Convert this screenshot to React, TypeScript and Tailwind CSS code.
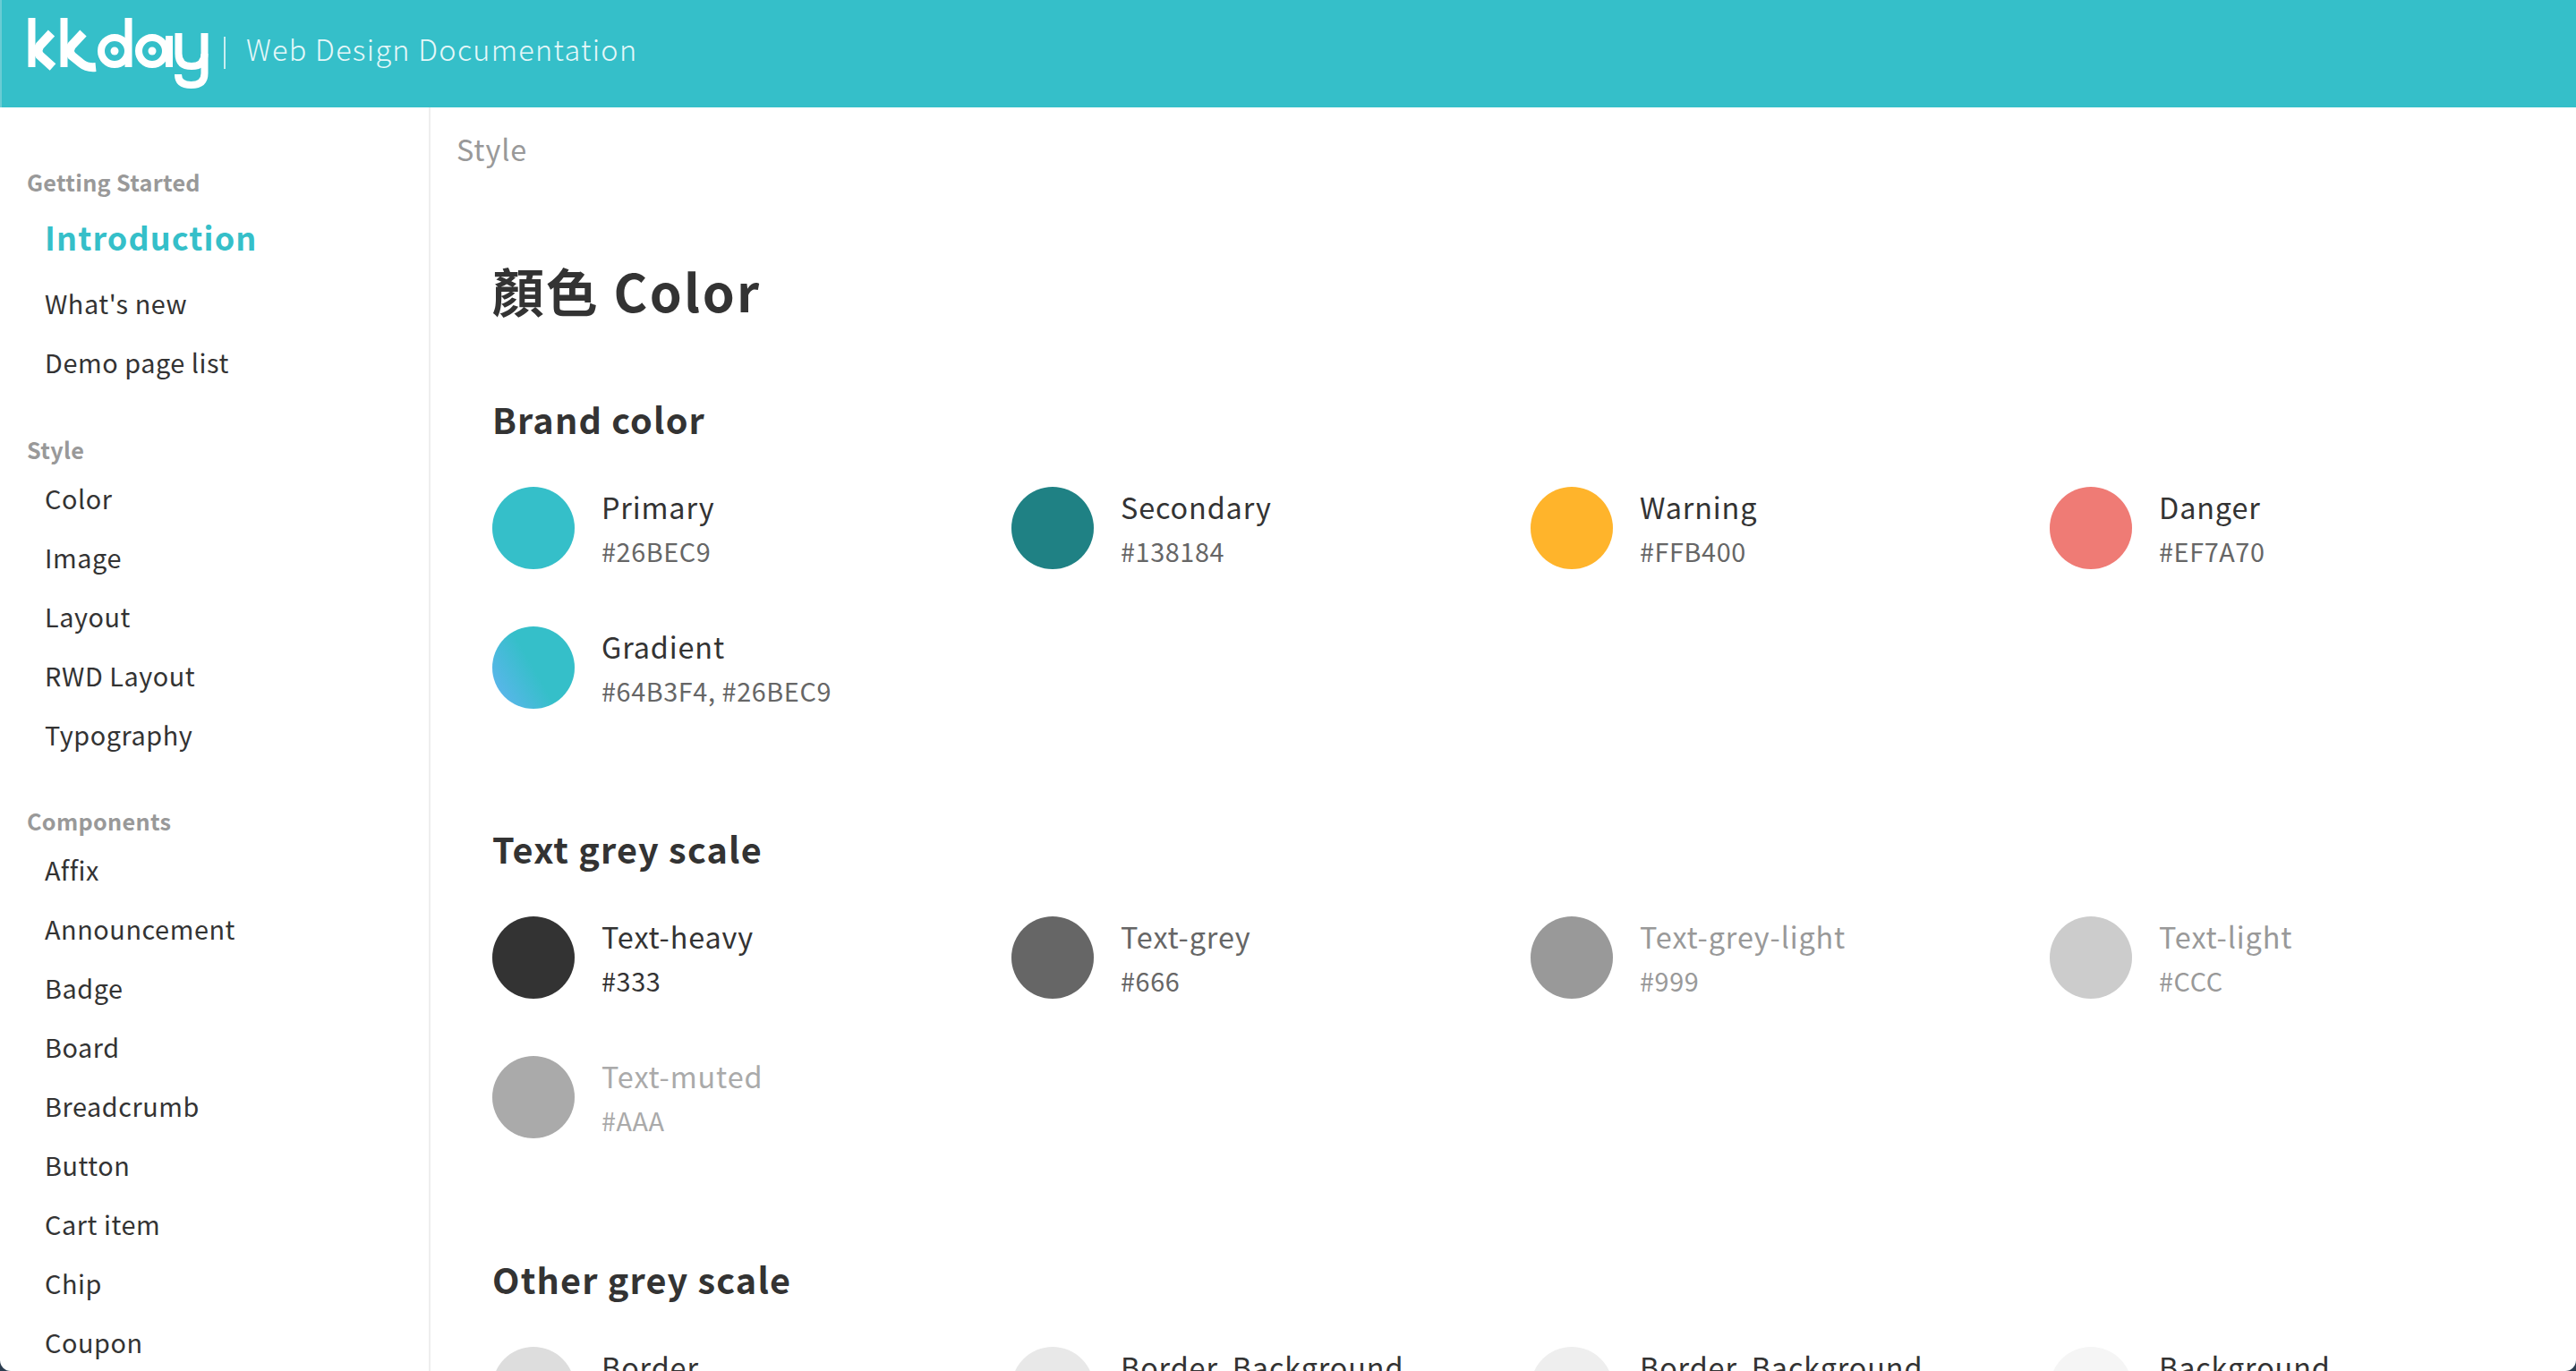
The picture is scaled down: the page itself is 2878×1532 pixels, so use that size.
const sans = "font-['Noto_Sans_CJK_TC','Noto_Sans',sans-serif]";

function Logo() {
  return (
    <svg width="240" height="120" viewBox="0 0 240 120" className="shrink-0" fill="none" stroke="#fff" strokeWidth="8" strokeLinecap="butt">
      <path d="M33.500 20V75" />
      <path d="M55.500 37L42.500 51Q38.500 56.500 42.500 62L57 75" strokeWidth="10" />
      <path d="M69.500 20V75" />
      <path d="M91 37L78 51Q74 56.500 78 62L89 71Q95 76 105 75" strokeWidth="10" />
      <circle cx="126" cy="57" r="15" />
      <circle cx="126" cy="57" r="4.500" fill="#fff" stroke="none" />
      <path d="M141.500 20V75" />
      <circle cx="168" cy="57" r="15" />
      <circle cx="168" cy="57" r="4.500" fill="#fff" stroke="none" />
      <path d="M187 40V75" />
      <path d="M197.500 37V60Q197.500 74 212 74Q226.500 74 226.500 60" />
      <path d="M226.500 37V82Q226.500 95 211.500 95Q197 95 197 83" />
    </svg>
  );
}

const groups: { title: string; items: string[] }[] = [
  { title: "Style", items: ["Color", "Image", "Layout", "RWD Layout", "Typography"] },
  { title: "Components", items: ["Affix", "Announcement", "Badge", "Board", "Breadcrumb", "Button", "Cart item", "Chip", "Coupon"] },
];

function NavItem({ label }: { label: string }) {
  return <div className="pl-[50px] h-[66px] flex items-center text-[28.8px] leading-none tracking-[0.57px] text-[#333]">{label}</div>;
}

function Sidebar() {
  return (
    <aside className="w-[481px] shrink-0 border-r-[2px] border-[#eeeeee] pt-[71px]">
      <div className="pl-[30px] h-[26px] mb-[16px] flex items-center text-[25.2px] font-bold leading-none tracking-[0.3px] text-[#999]">Getting Started</div>
      <div className="pl-[50px] h-[62px] mb-[11px] flex items-center text-[36px] font-bold leading-none tracking-[1.1px] text-[#35bfc9]">Introduction</div>
      <NavItem label="What's new" />
      <NavItem label="Demo page list" />
      <div className="h-[20px]" />
      {groups.map((g) => (
        <div key={g.title} className="mt-[32px]">
          <div className="pl-[30px] h-[26px] mb-[8px] flex items-center text-[25.2px] font-bold leading-none tracking-[0.3px] text-[#999]">{g.title}</div>
          {g.items.map((i) => <NavItem key={i} label={i} />)}
          <div className="h-[19px]" />
        </div>
      ))}
    </aside>
  );
}

type Swatch = { name: string; code: string; bg: string; nameC: string; codeC: string };

function SwatchItem({ s }: { s: Swatch }) {
  return (
    <div className="flex items-center gap-[30px] h-[92px]">
      <div className={`w-[92px] h-[92px] rounded-full shrink-0 ${s.bg}`} />
      <div className="flex flex-col pb-[2px]">
        <div className={`text-[32.4px] leading-[52px] tracking-[0.85px] ${s.nameC}`}>{s.name}</div>
        <div className={`text-[28.8px] leading-[47px] tracking-[0.6px] ${s.codeC}`}>{s.code}</div>
      </div>
    </div>
  );
}

function Section({ title, items, className }: { title: string; items: Swatch[]; className: string }) {
  return (
    <section className={className}>
      <h2 className="text-[39.6px] font-bold leading-[60px] text-[#333] tracking-[1.17px]">{title}</h2>
      <div className="grid grid-cols-[580px_580px_580px_580px] gap-y-[64px] mt-[46px]">
        {items.map((s) => <SwatchItem key={s.name} s={s} />)}
      </div>
    </section>
  );
}

const brand: Swatch[] = [
  { name: "Primary", code: "#26BEC9", bg: "bg-[#35bfc9]", nameC: "text-[#333]", codeC: "text-[#666]" },
  { name: "Secondary", code: "#138184", bg: "bg-[#1f8184]", nameC: "text-[#333]", codeC: "text-[#666]" },
  { name: "Warning", code: "#FFB400", bg: "bg-[#ffb42b]", nameC: "text-[#333]", codeC: "text-[#666]" },
  { name: "Danger", code: "#EF7A70", bg: "bg-[#ef7b75]", nameC: "text-[#333]", codeC: "text-[#666]" },
  { name: "Gradient", code: "#64B3F4, #26BEC9", bg: "bg-[linear-gradient(60deg,#64b3f4_0%,#35bfc9_50%)]", nameC: "text-[#333]", codeC: "text-[#666]" },
];
const textGrey: Swatch[] = [
  { name: "Text-heavy", code: "#333", bg: "bg-[#333]", nameC: "text-[#333]", codeC: "text-[#333]" },
  { name: "Text-grey", code: "#666", bg: "bg-[#666]", nameC: "text-[#666]", codeC: "text-[#666]" },
  { name: "Text-grey-light", code: "#999", bg: "bg-[#999]", nameC: "text-[#999]", codeC: "text-[#999]" },
  { name: "Text-light", code: "#CCC", bg: "bg-[#ccc]", nameC: "text-[#999]", codeC: "text-[#999]" },
  { name: "Text-muted", code: "#AAA", bg: "bg-[#aaa]", nameC: "text-[#aaa]", codeC: "text-[#aaa]" },
];
const otherGrey: Swatch[] = [
  { name: "Border", code: "#DDD", bg: "bg-[#ddd]", nameC: "text-[#333]", codeC: "text-[#666]" },
  { name: "Border, Background", code: "#E8E8E8", bg: "bg-[#e8e8e8]", nameC: "text-[#333]", codeC: "text-[#666]" },
  { name: "Border, Background", code: "#EEE", bg: "bg-[#eee]", nameC: "text-[#333]", codeC: "text-[#666]" },
  { name: "Background", code: "#F5F5F5", bg: "bg-[#f5f5f5]", nameC: "text-[#333]", codeC: "text-[#666]" },
];

export default function App() {
  return (
    <div className="w-[2878px] h-[1532px] bg-[#2c3e50]">
      <div className={`${sans} w-full h-full overflow-hidden rounded-b-[12px] bg-white flex flex-col`}>
        <header className="h-[120px] shrink-0 bg-[#35bfc9] border-l-[2px] border-[#6accd4] flex items-start">
          <Logo />
          <div className="w-[2px] h-[36px] bg-[#c9eef1] mt-[41px] ml-[8px]" />
          <div className="ml-[23px] mt-[31px] text-[32.4px] leading-[46px] font-light tracking-[1.3px] text-[#e6f8f9]">Web Design Documentation</div>
        </header>
        <div className="flex flex-1 min-h-0">
          <Sidebar />
          <main className="flex-1 min-w-0">
            <div className="pl-[29px] pt-[23px] text-[32.4px] leading-[46px] tracking-[0.9px] text-[#999]">Style</div>
            <div className="pl-[69px]">
              <h1 className="mt-[95px] text-[57.6px] font-bold leading-[80px] text-[#333] tracking-[2.4px]">顏色 Color</h1>
              <Section className="mt-[74px]" title="Brand color" items={brand} />
              <Section className="mt-[126px]" title="Text grey scale" items={textGrey} />
              <Section className="mt-[127px]" title="Other grey scale" items={otherGrey} />
            </div>
          </main>
        </div>
      </div>
    </div>
  );
}
